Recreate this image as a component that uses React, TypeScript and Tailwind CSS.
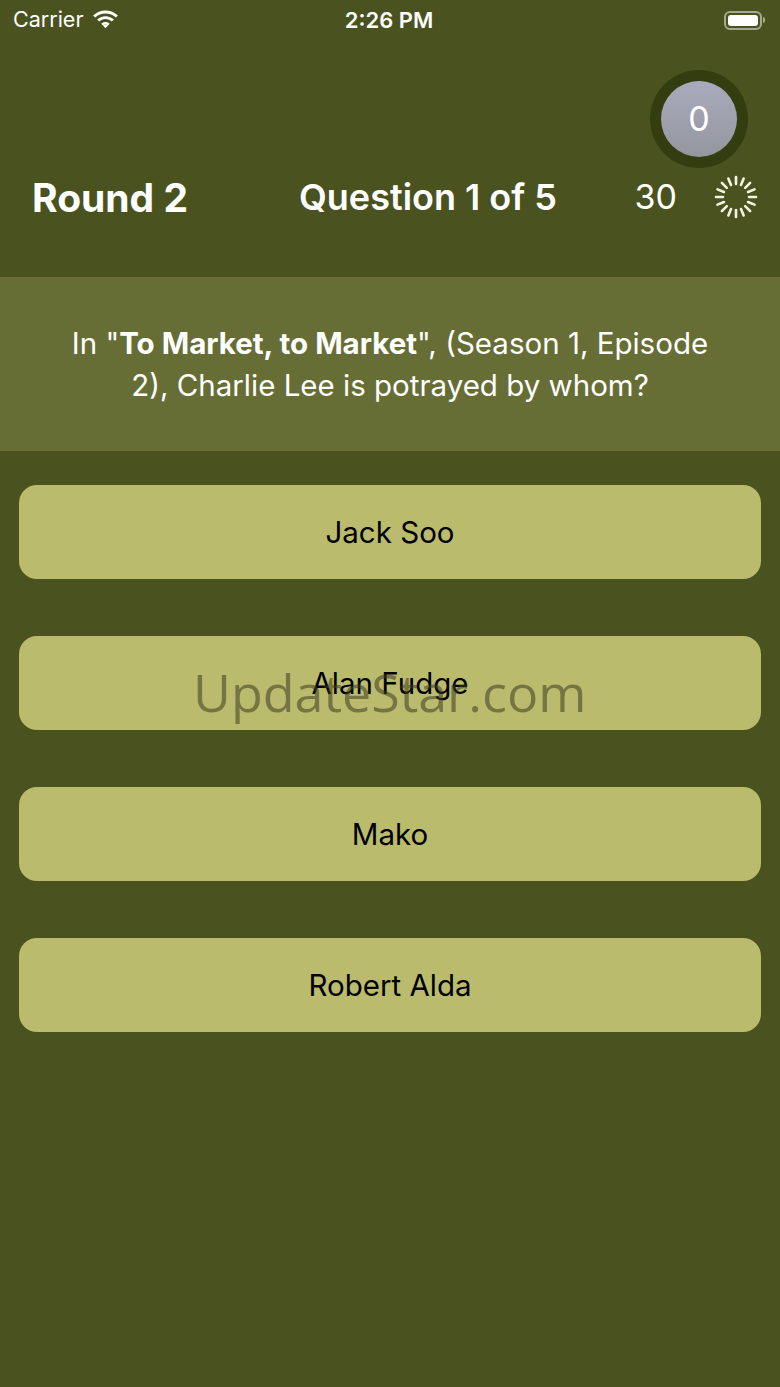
import React from "react";

const font = { fontFamily: "Inter, 'Liberation Sans', sans-serif" };

function Wifi() {
  return (
    <svg width="29" height="22" viewBox="0 0 26 20">
      <path d="M13 4c3.6 0 6.9 1.4 9.4 3.7l1.9-1.9C21.3 3 17.3 1.3 13 1.3S4.7 3 1.7 5.8l1.9 1.9C6.1 5.4 9.4 4 13 4z" fill="white" />
      <path d="M13 9.2c2.2 0 4.2.8 5.7 2.2l1.9-1.9c-2-1.8-4.7-3-7.6-3s-5.6 1.2-7.6 3l1.9 1.9c1.5-1.4 3.5-2.2 5.7-2.2z" fill="white" />
      <path d="M13 14.2c.9 0 1.7.3 2.3.9L13 17.6l-2.3-2.5c.6-.6 1.4-.9 2.3-.9z" fill="white" />
      <path d="M13 11.8c1.5 0 2.8.6 3.8 1.5l-1.5 1.6c-.6-.6-1.4-.9-2.3-.9s-1.7.3-2.3.9l-1.5-1.6c1-.9 2.3-1.5 3.8-1.5z" fill="white" />
    </svg>
  );
}

function Spinner() {
  const n = 16;
  const lines = [];
  for (let i = 0; i < n; i++) {
    const a = (i / n) * Math.PI * 2;
    const r1 = 13;
    const r2 = 20;
    lines.push(
      <line
        key={i}
        x1={22 + Math.cos(a) * r1}
        y1={22 + Math.sin(a) * r1}
        x2={22 + Math.cos(a) * r2}
        y2={22 + Math.sin(a) * r2}
        stroke="#f3f3e0"
        strokeWidth="2.6"
        strokeLinecap="round"
      />
    );
  }
  return (
    <svg width="44" height="44" viewBox="0 0 44 44">
      {lines}
    </svg>
  );
}

const answers = ["Jack Soo", "Alan Fudge", "Mako", "Robert Alda"];

export default function App() {
  return (
    <div className="relative w-[780px] h-[1387px] bg-[#4a531f] overflow-hidden" style={font}>
      {/* status bar */}
      <div className="h-[40px] flex items-center justify-between pl-[13px] pr-[15px] text-white">
        <div className="flex items-center gap-[8px] w-[200px]">
          <span className="text-[21.5px] leading-none">Carrier</span>
          <Wifi />
        </div>
        <span className="text-[22px] font-semibold leading-none">2:26 PM</span>
        <div className="w-[200px] flex justify-end items-center">
          <div className="w-[38px] h-[19px] rounded-[6px] border-[2px] border-white/50 p-[2px]">
            <div className="w-full h-full rounded-[3px] bg-white" />
          </div>
          <div className="w-[2px] h-[6px] rounded-r bg-white/50 ml-[1px]" />
        </div>
      </div>

      {/* score circle */}
      <div className="flex justify-end pr-[32px] mt-[30px]">
        <div className="w-[98px] h-[98px] rounded-full bg-[#333d10] flex items-center justify-center">
          <div className="w-[76px] h-[76px] rounded-full bg-gradient-to-b from-[#a9abbd] to-[#94969f] flex items-center justify-center text-white text-[34px] leading-none">
            0
          </div>
        </div>
      </div>

      {/* header row */}
      <div className="h-[58px] flex items-center pl-[32px] pr-[22px] text-white">
        <div className="w-[267px] text-[39px] font-bold leading-none">Round 2</div>
        <div className="flex-1 text-[36px] font-semibold leading-none">Question 1 of 5</div>
        <div className="text-[34px] leading-none mr-[37px]">30</div>
        <Spinner />
      </div>

      {/* question band */}
      <div className="mt-[51px] h-[174px] bg-[#676e35] flex items-center justify-center px-[56px]">
        <p className="text-white text-[29.5px] leading-[42px] text-center">
          In "<b className="font-bold">To Market, to Market</b>", (Season 1, Episode 2), Charlie Lee is potrayed by whom?
        </p>
      </div>

      {/* answers */}
      <div className="mt-[34px] px-[19px] flex flex-col gap-[57px]">
        {answers.map((a) => (
          <div
            key={a}
            className="h-[94px] rounded-[18px] bg-[#bbbb6e] flex items-center justify-center text-black text-[29.5px]"
          >
            {a}
          </div>
        ))}
      </div>

      {/* watermark */}
      <div
        className="absolute left-[193px] top-[666px] text-[52px] leading-none text-[#3d3d22]/55 pointer-events-none"
        style={{ fontFamily: "'Open Sans', sans-serif" }}
      >
        UpdateStar.com
      </div>
    </div>
  );
}
